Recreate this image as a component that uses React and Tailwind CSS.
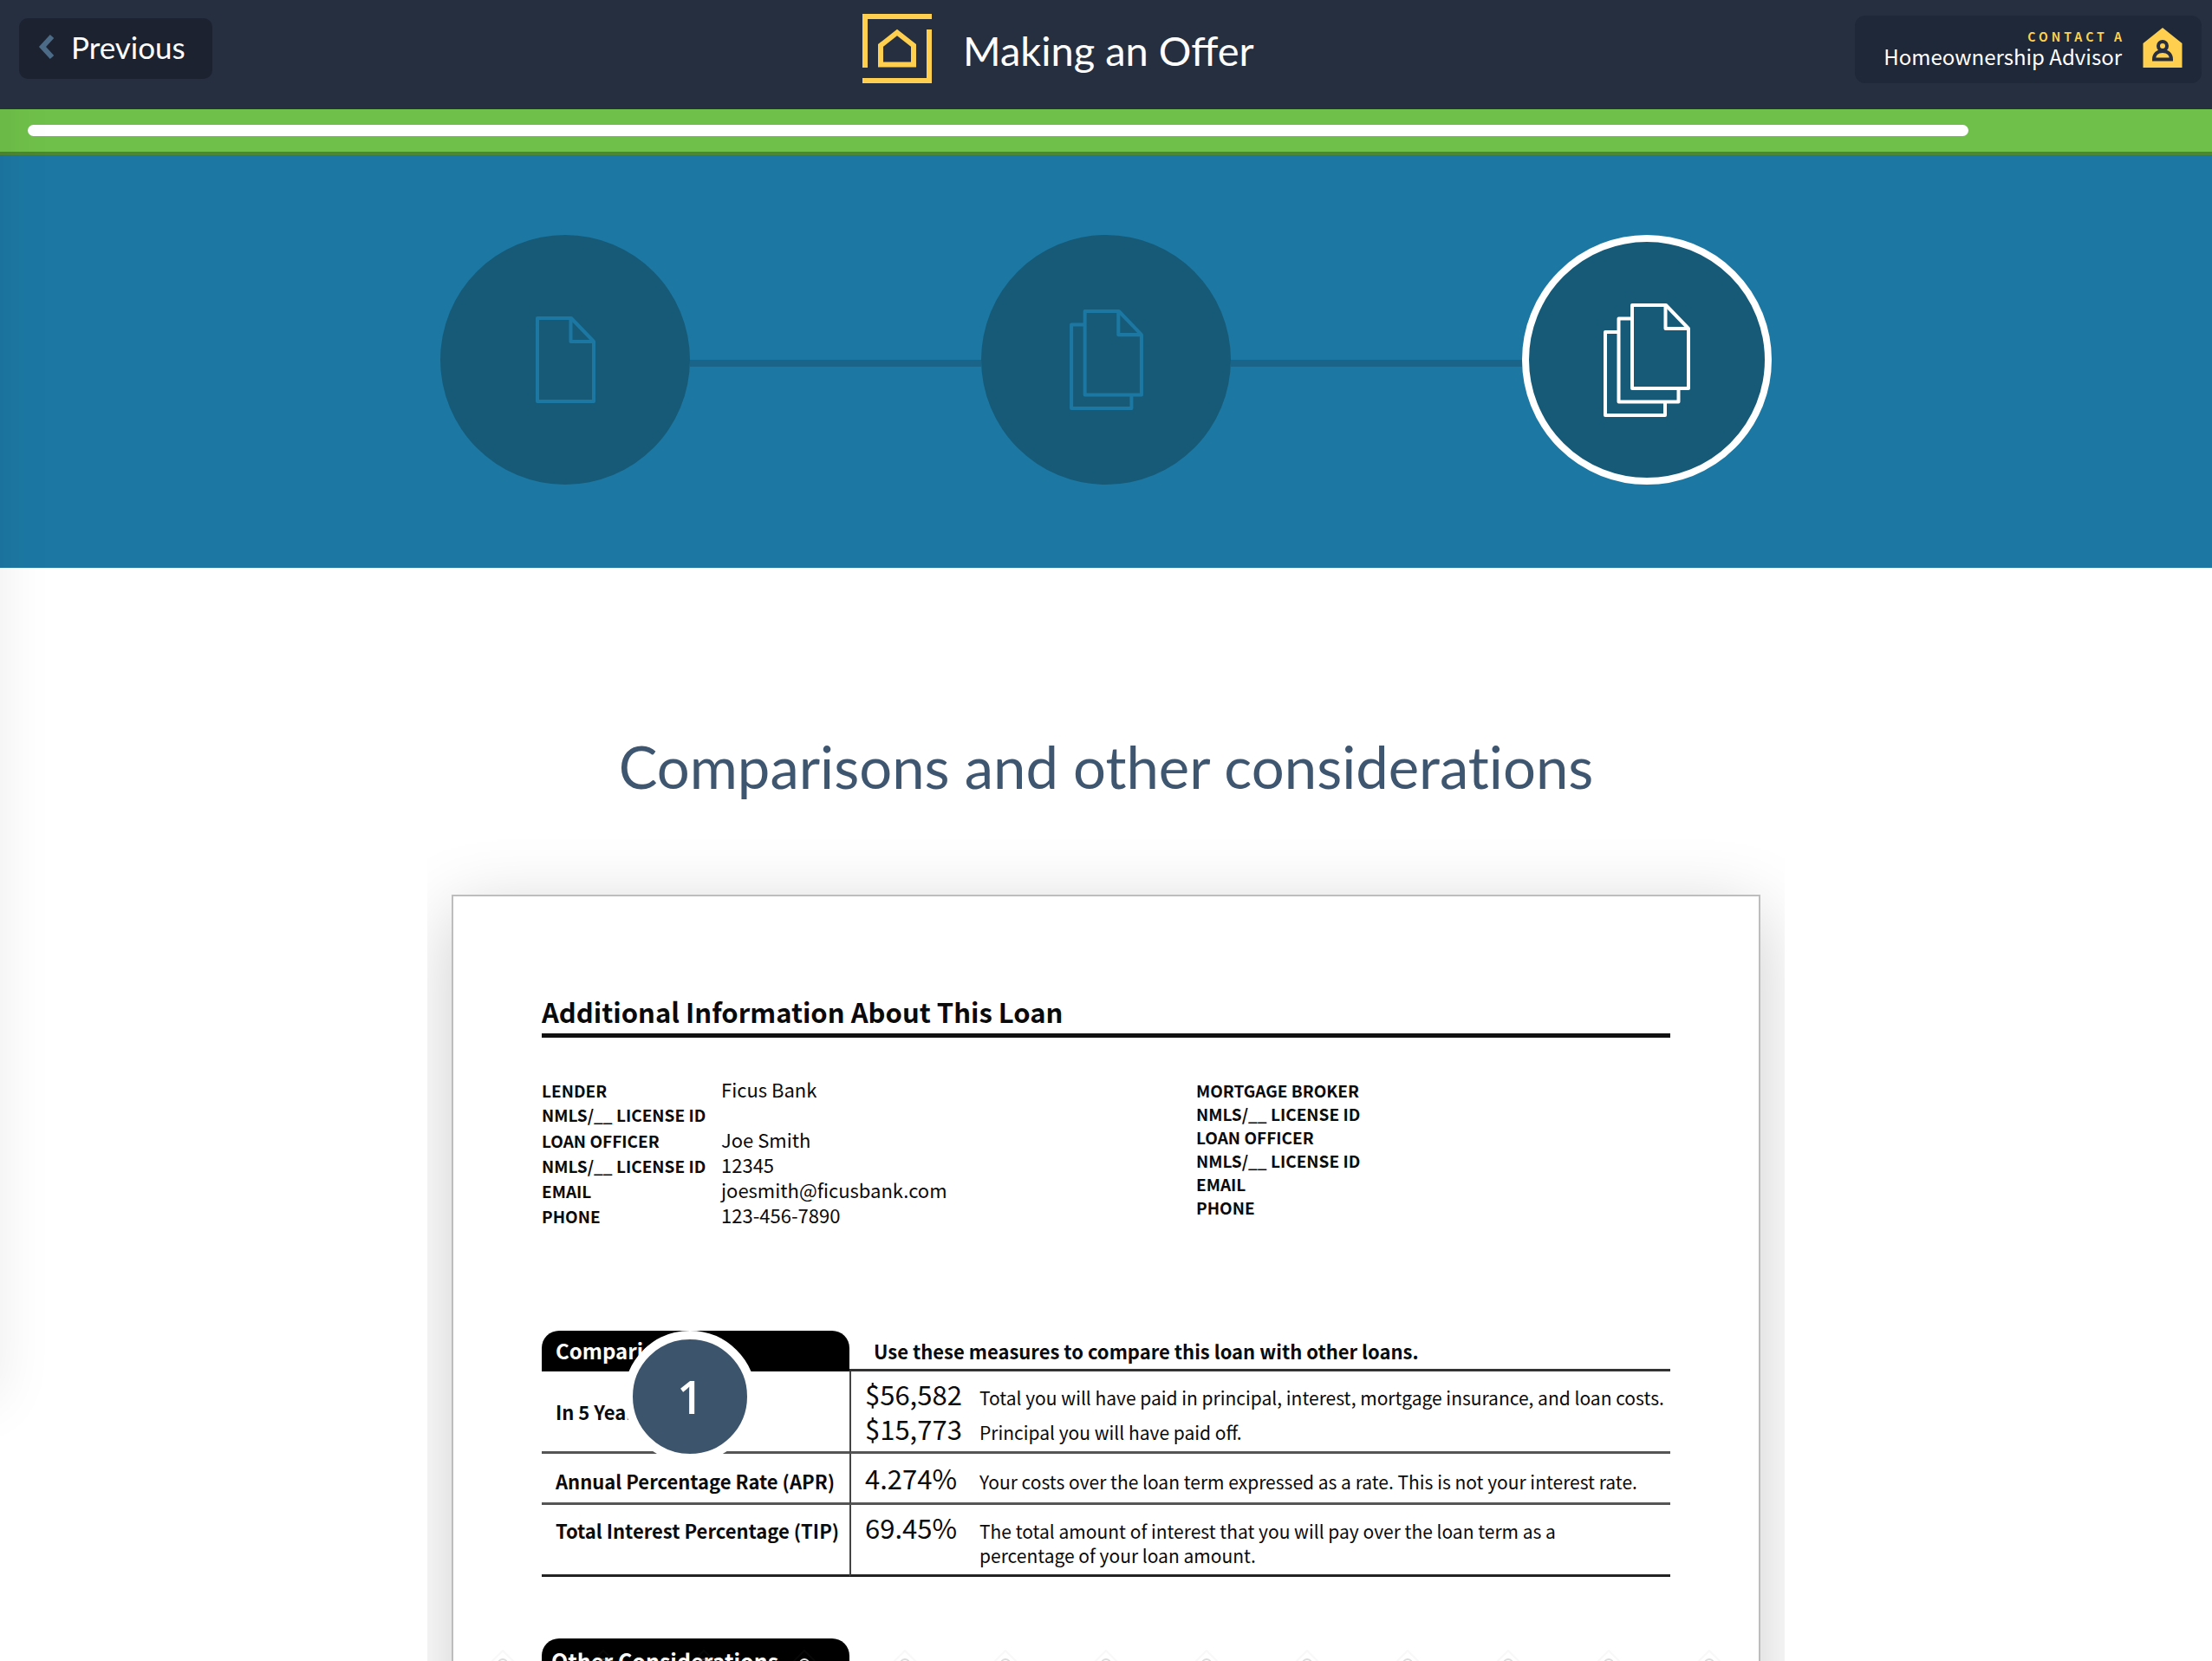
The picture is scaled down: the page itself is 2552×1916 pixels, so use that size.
const sheet = 'M0 0H39L65 27V96H0Z';

function FilesIcon({ count, className }) {
  // Front sheet plus (count - 1) sheets peeking out behind it, each 15 units down-left.
  const back = count - 1;
  const w = 69 + back * 15.5;
  const h = 100 + back * 15.5;
  const ox = 2 + back * 15.5;
  return (
    <svg
      width={Math.round(w)}
      height={Math.round(h)}
      viewBox={`0 0 ${w} ${h}`}
      fill="none"
      stroke="currentColor"
      strokeWidth="4"
      strokeLinejoin="round"
      className={className}
      aria-hidden="true"
    >
      <g transform={`translate(${ox} 2)`}>
        <path d={sheet} />
        <path d="M38.500 0V27H65" />
        {back > 0 && <path d="M0 15.500H-15.500V111.500H53.500V96" />}
        {back > 1 && <path d="M-15.500 31H-31V127H38V111.500" />}
      </g>
    </svg>
  );
}

function Step({ count, active }) {
  return (
    <li
      aria-current={active ? 'step' : undefined}
      className={
        active
          ? 'flex size-72 shrink-0 items-center justify-center rounded-full border-8 border-white bg-[#165a78] text-white'
          : 'flex size-72 shrink-0 items-center justify-center rounded-full bg-[#165a78] text-[#1c78a3]'
      }
    >
      <FilesIcon count={count} />
    </li>
  );
}

function Connector() {
  return <li aria-hidden="true" className="mt-2 h-2 flex-1 bg-[#1a648a]" />;
}

const lender = [
  ['LENDER', 'Ficus Bank'],
  ['NMLS/__ LICENSE ID', ''],
  ['LOAN OFFICER', 'Joe Smith'],
  ['NMLS/__ LICENSE ID', '12345'],
  ['EMAIL', 'joesmith@ficusbank.com'],
  ['PHONE', '123-456-7890'],
];

const broker = ['MORTGAGE BROKER', 'NMLS/__ LICENSE ID', 'LOAN OFFICER', 'NMLS/__ LICENSE ID', 'EMAIL', 'PHONE'];

const rowHead = 'pl-4 text-left text-[22px] font-bold leading-7 whitespace-nowrap';
const amount = 'border-l-2 border-[#444] pl-4 text-left text-[31px] leading-10';
const note = 'text-[21px] leading-7 whitespace-nowrap';

function ComparisonTable() {
  return (
    <table className="w-full table-fixed border-separate border-spacing-0">
      <colgroup>
        <col className="w-[355px]" />
        <col className="w-[150px]" />
        <col />
      </colgroup>
      <thead>
        <tr>
          <th scope="col" className="rounded-t-[20px] border-b-[3px] border-black bg-black pt-0.5 pl-4 text-left text-2xl leading-[42px] font-bold text-white">
            Comparisons
          </th>
          <th scope="col" colSpan={2} className="border-b-[3px] border-[#333] pt-0.5 pl-7 text-left text-[22px] leading-[42px] font-bold">
            Use these measures to compare this loan with other loans.
          </th>
        </tr>
      </thead>
      <tbody className="align-baseline">
        <tr>
          <th scope="row" rowSpan={2} className={`${rowHead} border-b-[3px] border-[#555] align-middle`}>In 5 Years</th>
          <td className={`${amount} pt-1.5`}>$56,582</td>
          <td className={note}>Total you will have paid in principal, interest, mortgage insurance, and loan costs.</td>
        </tr>
        <tr>
          <td className={`${amount} border-b-[3px] border-b-[#555] pb-1.5`}>$15,773</td>
          <td className={`${note} border-b-[3px] border-[#555]`}>Principal you will have paid off.</td>
        </tr>
        <tr>
          <th scope="row" className={`${rowHead} border-b-[3px] border-[#555]`}>Annual Percentage Rate (APR)</th>
          <td className={`${amount} border-b-[3px] border-b-[#555] pt-2 pb-2`}>4.274%</td>
          <td className={`${note} border-b-[3px] border-[#555]`}>Your costs over the loan term expressed as a rate. This is not your interest rate.</td>
        </tr>
        <tr>
          <th scope="row" className={`${rowHead} border-b-[3px] border-[#222]`}>Total Interest Percentage (TIP)</th>
          <td className={`${amount} border-b-[3px] border-b-[#222] pt-1.5`}>69.45%</td>
          <td className={`${note} border-b-[3px] border-[#222] pb-2`}>
            The total amount of interest that you will pay over the loan term as a
            <br />
            percentage of your loan amount.
          </td>
        </tr>
      </tbody>
    </table>
  );
}

function LoanDocument() {
  return (
    <div className="mx-auto mt-6 w-full max-w-[1566px] overflow-hidden px-7 pt-20">
      <article className="border-2 border-[#bdbdbd] bg-white px-[102px] pt-[113px] pb-40 font-['Noto_Sans_CJK_JP',sans-serif] text-[#0a0a0a] shadow-[0_20px_80px_rgba(0,0,0,0.2)]">
        <h3 className="border-b-[5px] border-[#111] pb-[5px] text-[31px] leading-10 font-bold">
          Additional Information About This Loan
        </h3>

        <div className="mt-[45px] grid grid-cols-[755px_1fr]">
          <dl className="grid auto-rows-[29px] grid-cols-[207px_1fr] items-baseline">
            {lender.map(([label, value], i) => (
              <div key={i} className="contents">
                <dt className="text-[19px] leading-[29px] font-bold">{label}</dt>
                <dd className="text-[22px] leading-[29px]">{value}</dd>
              </div>
            ))}
          </dl>
          <ul className="pt-0.5">
            {broker.map((label, i) => (
              <li key={i} className="text-[19px] leading-[27px] font-bold">{label}</li>
            ))}
          </ul>
        </div>

        <div className="relative mt-[119px]">
          <ComparisonTable />
          <button
            type="button"
            className="absolute top-0 left-[95px] flex size-[152px] items-center justify-center rounded-full border-[10px] border-white bg-[#3d556c] font-['Open_Sans',sans-serif] text-[52px] leading-none font-semibold text-white"
          >
            1
          </button>
        </div>

        <h4 className="mt-[71px] w-[355px] rounded-t-[20px] bg-black pl-[11px] text-[25px] leading-[50px] font-bold text-white">
          Other Considerations
        </h4>
      </article>
    </div>
  );
}

function BottomOrnaments() {
  return (
    <div aria-hidden="true" className="absolute inset-x-0 bottom-0 flex justify-center gap-[76px]">
      {Array.from({ length: 13 }, (_, i) => (
        <svg key={i} width="40" height="14" viewBox="0 0 40 14" fill="none">
          <path d="M6 16L20 2L34 16" stroke="#888" strokeOpacity="0.06" strokeWidth="2" />
          <circle cx="20" cy="17" r="5" stroke={i === 3 ? '#fff' : '#999'} strokeOpacity={i === 3 ? 0.9 : 0.35} strokeWidth="2" />
        </svg>
      ))}
    </div>
  );
}

function Header() {
  return (
    <header className="z-20 grid h-[126px] shrink-0 grid-cols-[1fr_auto_1fr] items-start bg-[#262f40] text-white">
      <button
        type="button"
        className="mt-[21px] ml-[22px] flex h-[70px] w-[223px] items-center gap-5 justify-self-start rounded-[10px] bg-[#1c2230] pb-1 pl-[22px] font-['Lato',sans-serif] text-[35px] leading-none"
      >
        <svg width="18" height="28" viewBox="0 0 18 28" fill="none" stroke="#4c6b87" strokeWidth="6" aria-hidden="true">
          <path d="M16 2L5 14L16 26" />
        </svg>
        Previous
      </button>

      <div className="flex w-[562px] gap-9 pt-4">
        <svg width="80" height="80" viewBox="0 0 80 80" fill="none" stroke="#ffd04f" strokeWidth="6" aria-hidden="true">
          <path d="M80 3H3V62" />
          <path d="M0 77H77V18" />
          <path d="M21 58.500V36.500L40 21.500L59 36.500V58.500Z" />
        </svg>
        <h1 className="pt-3 font-['Lato',sans-serif] text-[47px] leading-[60px] font-normal whitespace-nowrap">Making an Offer</h1>
      </div>

      <button
        type="button"
        className="mt-[18px] mr-3 flex h-[78px] w-[400px] items-start justify-end gap-6 justify-self-end rounded-xl bg-[#1e2838] pt-3.5 pr-[22px] font-['Noto_Sans_CJK_JP',sans-serif]"
      >
        <span className="flex flex-col items-end pt-0.5">
          <span className="-mr-1 text-sm leading-4 font-bold tracking-[4px] text-[#ffd04f]">CONTACT A</span>
          <span className="text-2xl leading-[30px] whitespace-nowrap">Homeownership Advisor</span>
        </span>
        <svg width="46" height="46" viewBox="0 0 46 46" fill="none" aria-hidden="true">
          <path d="M23 0L45.500 18V46H0.500V18Z" fill="#ffd04f" />
          <g stroke="#262e40" strokeWidth="4">
            <circle cx="23" cy="21" r="5" />
            <path d="M13 36.500C13 30.500 17 27 23 27S33 30.500 33 36.500Z" />
          </g>
        </svg>
      </button>
    </header>
  );
}

export default function App() {
  return (
    <div className="relative flex h-screen flex-col overflow-hidden bg-white">
      <Header />

      <div className="shrink-0 border-b-4 border-[#4d8733] bg-[#6fc04a] px-8 py-[18px]">
        <div role="progressbar" aria-valuenow={90} aria-valuemin={0} aria-valuemax={100} aria-label="Progress" className="h-[13px]">
          <div className="h-full w-[90%] rounded-full bg-white" />
        </div>
      </div>

      <main className="min-h-0 flex-1 overflow-hidden">
        <section className="h-[476px] bg-[#1c78a3] pt-[92px]">
          <ol className="mx-auto flex max-w-[1536px] items-center">
            <Step count={1} />
            <Connector />
            <Step count={2} />
            <Connector />
            <Step count={3} active />
          </ol>
        </section>

        <h2 className="pt-[185px] text-center font-['Lato',sans-serif] text-[67px] leading-[88px] font-normal text-[#3f5671] [font-variant-ligatures:none]">
          Comparisons and other considerations
        </h2>

        <LoanDocument />
      </main>

      <div aria-hidden="true" className="pointer-events-none absolute top-0 -left-80 z-10 h-[1616px] w-80 shadow-[0_0_60px_rgba(0,0,0,0.08)]" />
      <BottomOrnaments />
    </div>
  );
}
